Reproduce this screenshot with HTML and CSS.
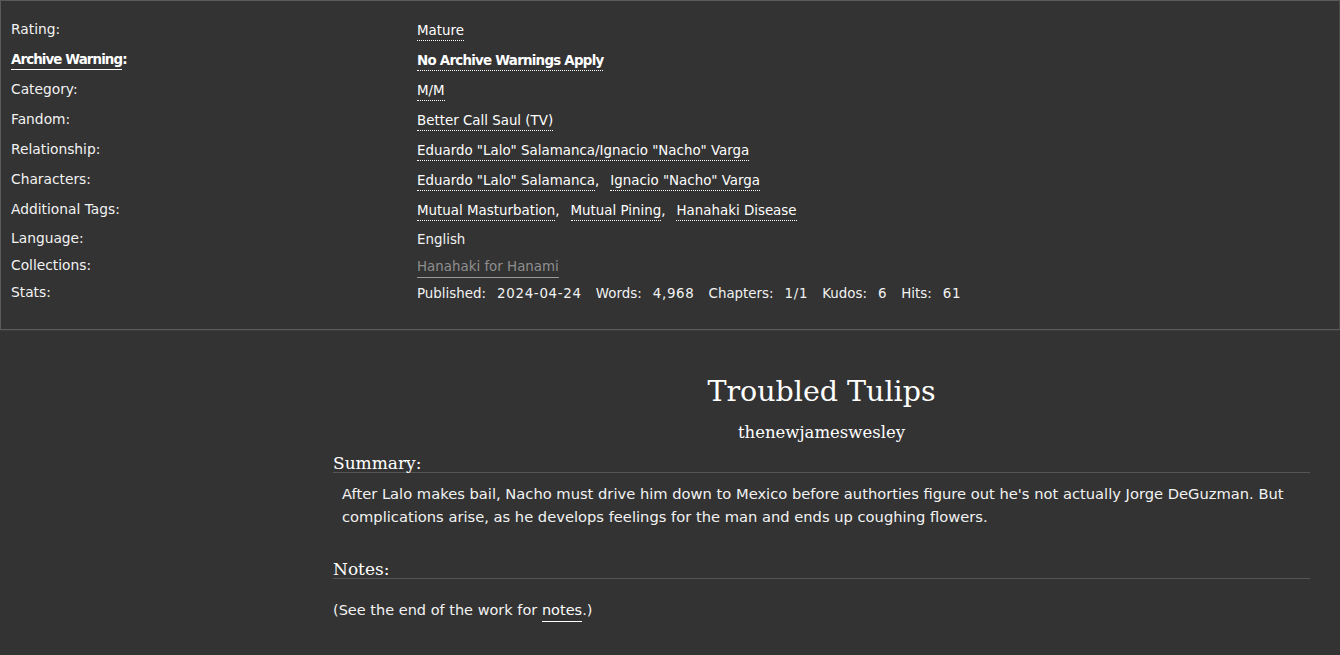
FILE: index.html
```html
<!DOCTYPE html>
<html lang="en">
<head>
<meta charset="utf-8">
<title>Troubled Tulips</title>
<link rel="stylesheet" href="styles.css">
</head>
<body>
<div class="meta">
  <dl class="meta-grid">
    <dt class="row-tag">Rating:</dt>
    <dd class="row-tag"><a class="tag">Mature</a></dd>
    <dt class="row-tag"><span class="warn-label">Archive Warning</span><span class="warn-colon">:</span></dt>
    <dd class="row-tag"><a class="tag bold">No Archive Warnings Apply</a></dd>
    <dt class="row-tag">Category:</dt>
    <dd class="row-tag"><a class="tag">M/M</a></dd>
    <dt class="row-tag">Fandom:</dt>
    <dd class="row-tag"><a class="tag">Better Call Saul (TV)</a></dd>
    <dt class="row-tag">Relationship:</dt>
    <dd class="row-tag"><a class="tag">Eduardo "Lalo" Salamanca/Ignacio "Nacho" Varga</a></dd>
    <dt class="row-tag">Characters:</dt>
    <dd class="row-tag"><ul class="commas"><li><a class="tag">Eduardo "Lalo" Salamanca</a></li><li><a class="tag">Ignacio "Nacho" Varga</a></li></ul></dd>
    <dt class="row-tag">Additional Tags:</dt>
    <dd class="row-tag"><ul class="commas"><li><a class="tag">Mutual Masturbation</a></li><li><a class="tag">Mutual Pining</a></li><li><a class="tag">Hanahaki Disease</a></li></ul></dd>
    <dt class="row-plain">Language:</dt>
    <dd class="row-plain">English</dd>
    <dt class="row-plain">Collections:</dt>
    <dd class="row-plain"><a class="coll">Hanahaki for Hanami</a></dd>
    <dt class="row-plain">Stats:</dt>
    <dd class="row-plain"><dl class="stats"><dt>Published:</dt><dd>2024-04-24</dd><dt>Words:</dt><dd>4,968</dd><dt>Chapters:</dt><dd>1/1</dd><dt>Kudos:</dt><dd>6</dd><dt>Hits:</dt><dd>61</dd></dl></dd>
  </dl>
</div>

<div class="work">
  <h2 class="title">Troubled Tulips</h2>
  <h3 class="byline">thenewjameswesley</h3>
  <div class="module">
    <h3 class="heading">Summary:</h3>
    <blockquote class="summary">After Lalo makes bail, Nacho must drive him down to Mexico before authorties figure out he's not actually Jorge DeGuzman. But complications arise, as he develops feelings for the man and ends up coughing flowers.</blockquote>
  </div>
  <div class="module notes-module">
    <h3 class="heading">Notes:</h3>
    <p class="notes">(See the end of the work for <a class="notes-link">notes</a>.)</p>
  </div>
</div>
</body>
</html>
```

FILE: styles.css
```css
html, body {
  margin: 0;
  padding: 0;
  background: #333333;
  color: #f2f2f2;
  font-family: "DejaVu Sans", Verdana, sans-serif;
  font-size: 13.4px;
}

.meta {
  border: 1px solid #5a5a5a;
  border-right-color: #4a4a4a;
  background: #333333;
  box-shadow: 0 1px 0 #3c3c3c;
}

.meta-grid {
  display: grid;
  grid-template-columns: 406px 1fr;
  margin: 0;
  padding: 15px 10px 22px;
}

.meta-grid > dt,
.meta-grid > dd {
  margin: 0;
  white-space: nowrap;
}

.meta-grid > dt {
  font-size: 13.8px;
}

.meta-grid > dt.row-tag {
  height: 30px;
  line-height: 26px;
}
.meta-grid > dd.row-tag {
  height: 30px;
  line-height: 30px;
}
.meta-grid > dt.row-plain {
  height: 27px;
  line-height: 25px;
}
.meta-grid > dd.row-plain {
  height: 27px;
  line-height: 27px;
}

.warn-label {
  font-weight: bold;
  font-size: 13.4px;
  letter-spacing: -0.9px;
  border-bottom: 1px solid #ffffff;
  padding-bottom: 2px;
  color: #ffffff;
}
.warn-colon {
  font-weight: bold;
  font-size: 13.4px;
  color: #ffffff;
}

.tag {
  color: #ffffff;
  border-bottom: 1px dotted #ffffff;
  padding-bottom: 2px;
  text-decoration: none;
}
.tag.bold {
  font-weight: bold;
  letter-spacing: -0.75px;
}

.commas {
  list-style: none;
  margin: 0;
  padding: 0;
  display: inline;
}
.commas li {
  display: inline;
}
.commas li::after {
  content: ",";
  margin-right: 11px;
  color: #ffffff;
}
.commas li:last-child::after {
  content: "";
  margin: 0;
}

.coll {
  color: #8f8f8f;
  border-bottom: 1px solid #9a9a9a;
  padding-bottom: 3px;
}

.stats {
  display: inline;
  margin: 0;
}
.stats dt,
.stats dd {
  display: inline;
  margin: 0;
}
.stats dt {
  margin-right: 11px;
}
.stats dd {
  letter-spacing: 0.7px;
  margin-right: 14px;
}

.work {
  margin: 0 30px 0 333px;
  padding-top: 42px;
}

.title {
  font-family: "DejaVu Serif", Georgia, serif;
  font-weight: normal;
  font-size: 28.5px;
  text-align: center;
  margin: 0;
  line-height: 40px;
  color: #ffffff;
}

.byline {
  font-family: "DejaVu Serif", Georgia, serif;
  font-weight: normal;
  font-size: 16.5px;
  text-align: center;
  margin: 9px 0 0;
  line-height: 24px;
  color: #ffffff;
}

.module {
  margin: 9px 0 0;
}

.heading {
  font-family: "DejaVu Serif", Georgia, serif;
  font-weight: normal;
  font-size: 17px;
  line-height: 18px;
  margin: 0;
  color: #ffffff;
  border-bottom: 1px solid #555555;
  padding-bottom: 0;
}

.summary {
  margin: 9px 0 0 9px;
  line-height: 23px;
  font-size: 14.7px;
  color: #f2f2f2;
}

.notes-module {
  margin-top: 32px;
}

.notes {
  margin: 20px 0 0;
  line-height: 23px;
  font-size: 14.5px;
}

.notes-link {
  color: #ffffff;
  border-bottom: 1px solid #ffffff;
  padding-bottom: 3px;
}
```
